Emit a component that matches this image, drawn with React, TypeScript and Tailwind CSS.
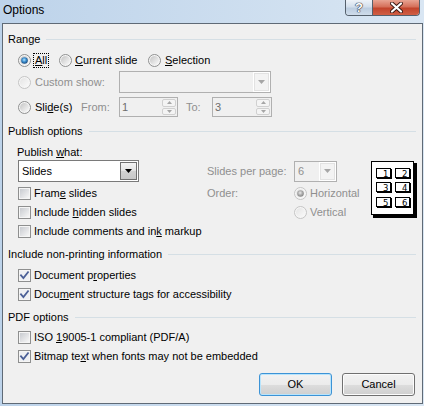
import React from "react";

function Radio({ checked = false, disabled = false }: { checked?: boolean; disabled?: boolean }) {
  return (
    <svg width="13" height="13" viewBox="0 0 13 13" className="shrink-0 block">
      <defs>
        <linearGradient id="rgE" x1="0" y1="0" x2="1" y2="1">
          <stop offset="0" stopColor="#c4c4c4" />
          <stop offset="1" stopColor="#fbfbfb" />
        </linearGradient>
        <linearGradient id="rgD" x1="0" y1="0" x2="1" y2="1">
          <stop offset="0" stopColor="#e4e4e4" />
          <stop offset="1" stopColor="#fafafa" />
        </linearGradient>
        <radialGradient id="rdB" cx="0.45" cy="0.4" r="0.6">
          <stop offset="0" stopColor="#b4e6fc" />
          <stop offset="0.5" stopColor="#3d8fd0" />
          <stop offset="1" stopColor="#18487c" />
        </radialGradient>
        <radialGradient id="rdG" cx="0.45" cy="0.4" r="0.6">
          <stop offset="0" stopColor="#ececec" />
          <stop offset="0.55" stopColor="#ababab" />
          <stop offset="1" stopColor="#858585" />
        </radialGradient>
      </defs>
      <circle cx="6.5" cy="6.5" r="6" fill="#f6f6f6" stroke={disabled ? "#c4c4c4" : "#8e8f8f"} />
      <circle cx="6.5" cy="6.5" r="4.5" fill={disabled ? "url(#rgD)" : "url(#rgE)"} />
      {checked && <circle cx="6.5" cy="6.5" r="3.3" fill={disabled ? "url(#rdG)" : "url(#rdB)"} />}
    </svg>
  );
}

function Check({ checked = false }: { checked?: boolean }) {
  return (
    <svg width="13" height="13" viewBox="0 0 13 13" className="shrink-0 block">
      <defs>
        <linearGradient id="cbG" x1="0" y1="0" x2="1" y2="1">
          <stop offset="0" stopColor="#c8cbd0" />
          <stop offset="1" stopColor="#f7f7f7" />
        </linearGradient>
      </defs>
      <rect x="0.5" y="0.5" width="12" height="12" fill="#f5f5f5" stroke="#8e8f8f" />
      <rect x="2" y="2" width="9" height="9" fill={checked ? "#eef0f3" : "url(#cbG)"} />
      {checked && (
        <path d="M3 6.3 L5.4 9 L10 3.2" fill="none" stroke="#4a5f97" strokeWidth="1.8" strokeLinecap="square" />
      )}
    </svg>
  );
}

function GroupHeader({ title }: { title: string }) {
  return (
    <div className="flex items-center h-[16px] pl-[5px] pr-[6px]">
      <span className="leading-[16px]">{title}</span>
      <div className="flex-1 h-px bg-[#d5dfe5] ml-[6px]" />
    </div>
  );
}

function Tri({ color }: { color: string }) {
  return (
    <svg width="7" height="4" viewBox="0 0 7 4" className="block">
      <path d="M0 0 H7 L3.5 4 Z" fill={color} />
    </svg>
  );
}

function SmallTri({ up }: { up?: boolean }) {
  return (
    <svg width="5" height="3" viewBox="0 0 5 3" className="block">
      <path d={up ? "M0 3 H5 L2.5 0 Z" : "M0 0 H5 L2.5 3 Z"} fill="#a6a6a6" />
    </svg>
  );
}

function DisabledCombo({ w, h, value }: { w: string; h: string; value?: string }) {
  return (
    <div className={`${w} ${h} shrink-0 border border-[#b0b0b0] bg-[#f0f0f0] flex items-stretch`}>
      <div className="flex-1 flex items-center pl-[3px] text-[#8f8f8f]">{value}</div>
      <div className="w-[17px] border border-white bg-[#f3f3f3] shadow-[inset_0_0_0_1px_#e2e2e2] flex items-center justify-center">
        <svg width="7" height="4" viewBox="0 0 7 4" className="block">
          <path d="M0 0 H7 L3.5 4 Z" fill="#a6a6a6" />
        </svg>
      </div>
    </div>
  );
}

function Spin({ w, value }: { w: string; value: string }) {
  return (
    <div className={`${w} h-[20px] shrink-0 border border-[#b0b0b0] bg-[#f0f0f0] flex items-stretch`}>
      <div className="flex-1 flex items-center pl-[2px] pt-[1px] text-[#6d6d6d]">{value}</div>
      <div className="w-[15px] flex flex-col py-[1px] pr-[1px] gap-[1px]">
        <div className="flex-1 border border-[#d0d0d0] rounded-[2px] bg-[#f4f4f4] flex items-center justify-center">
          <SmallTri up />
        </div>
        <div className="flex-1 border border-[#d0d0d0] rounded-[2px] bg-[#f4f4f4] flex items-center justify-center">
          <SmallTri />
        </div>
      </div>
    </div>
  );
}

function CheckRow({ checked, children }: { checked?: boolean; children: React.ReactNode }) {
  return (
    <div className="flex items-center h-[19px] pl-[15px]">
      <Check checked={checked} />
      <span className="ml-[3px] whitespace-nowrap">{children}</span>
    </div>
  );
}

function Thumb() {
  const cols = [5, 24];
  const rows = [7, 21, 36];
  let n = 0;
  return (
    <svg width="46" height="57" viewBox="0 0 46 57" className="block">
      <rect x="43" y="2" width="3" height="55" fill="#000" />
      <rect x="2" y="54" width="44" height="3" fill="#000" />
      <rect x="0.5" y="0.5" width="42" height="53" fill="#fff" stroke="#000" />
      {rows.map((ry) =>
        cols.map((cx) => {
          n += 1;
          return (
            <g key={`${cx}-${ry}`}>
              <rect x={cx + 0.5} y={ry + 0.5} width="14" height="9" fill="#fff" stroke="#000" />
              <rect x={cx + 15} y={ry + 1} width="1" height="10" fill="#000" />
              <rect x={cx + 1} y={ry + 10} width="15" height="1" fill="#000" />
              <text
                x={cx + 12.5}
                y={ry + 8.5}
                fontSize="8.5"
                textAnchor="end"
                fontFamily="'DejaVu Sans', Arial, sans-serif"
                fill="#000"
              >
                {n}
              </text>
            </g>
          );
        })
      )}
    </svg>
  );
}

function Btn({ children, primary }: { children: React.ReactNode; primary?: boolean }) {
  return (
    <div
      className={`w-[73px] h-[23px] rounded-[3px] border flex items-center justify-center bg-[linear-gradient(#f2f2f2_0%,#ebebeb_50%,#dddddd_50%,#cfcfcf_100%)] ${
        primary
          ? "border-[#3c93d6] shadow-[inset_0_0_0_1px_#b8e4fc]"
          : "border-[#707070] shadow-[inset_0_0_0_1px_#fcfcfc]"
      }`}
    >
      {children}
    </div>
  );
}

export default function App() {
  return (
    <div className="w-[424px] h-[406px] overflow-hidden bg-[linear-gradient(90deg,#bdd3ea,#d9e6f3)] font-['Liberation_Sans',Arial,sans-serif] text-[11px] text-black leading-none">
      {/* title bar */}
      <div className="h-[23px] flex items-start justify-between">
        <div className="pl-[3px] pt-[4px] text-[12px] leading-[13px]">Options</div>
        <div className="flex mr-[4px] h-[16px] border border-t-0 border-[#55606c] rounded-b-[4px] overflow-hidden">
          <div className="w-[27px] h-full bg-[linear-gradient(#eef3f9,#d3dfec_45%,#bccde0_55%,#cfdcea)] border-r border-[#55606c] flex items-center justify-center">
            <span className="text-[13px] font-bold text-white leading-none [text-shadow:0_0_1px_#223,0_0_1px_#223,0_0_1px_#223]">?</span>
          </div>
          <div className="w-[46px] h-full bg-[linear-gradient(#e8a493,#d5705a_45%,#c2442c_55%,#d05f45)] flex items-center justify-center">
            <svg width="13" height="11" viewBox="0 0 13 11" className="block">
              <path d="M2 1.5 L11 9.5 M11 1.5 L2 9.5" stroke="#3b1a14" strokeWidth="4" strokeLinecap="round" />
              <path d="M2 1.5 L11 9.5 M11 1.5 L2 9.5" stroke="#ffffff" strokeWidth="2.2" strokeLinecap="round" />
            </svg>
          </div>
        </div>
      </div>

      {/* client area */}
      <div className="ml-[2px] w-[421px] h-[381px] border border-[#5f6a76] bg-[#f0f0f0] flex flex-col pt-[7px]">
        <GroupHeader title="Range" />

        {/* row A */}
        <div className="mt-[3px] h-[20px] pl-[15px] flex items-center">
          <div className="w-[41px] flex items-center">
            <Radio checked />
            <span className="ml-[2px] border border-dotted border-black px-[1px] py-[1px] leading-[11px]">
              <u>A</u>ll
            </span>
          </div>
          <div className="w-[89px] flex items-center">
            <Radio />
            <span className="ml-[3px]">
              <u>C</u>urrent slide
            </span>
          </div>
          <div className="flex items-center">
            <Radio />
            <span className="ml-[4px]">
              <u>S</u>election
            </span>
          </div>
        </div>

        {/* row B */}
        <div className="mt-[1px] h-[22px] pl-[15px] flex items-center">
          <div className="w-[101px] shrink-0 flex items-center">
            <Radio disabled />
            <span className="ml-[4px] text-[#8f8f8f]">Custom show:</span>
          </div>
          <DisabledCombo w="w-[152px]" h="h-[22px]" />
        </div>

        {/* row C */}
        <div className="mt-[4px] h-[20px] pl-[15px] flex items-center">
          <div className="w-[63px] shrink-0 flex items-center">
            <Radio />
            <span className="ml-[4px]">
              Sli<u>d</u>e(s)
            </span>
          </div>
          <div className="w-[38px] shrink-0 text-[#8f8f8f]">From:</div>
          <Spin w="w-[59px]" value="1" />
          <div className="ml-[8px] w-[26px] shrink-0 text-[#8f8f8f]">To:</div>
          <Spin w="w-[60px]" value="3" />
        </div>

        <div className="mt-[6px]">
          <GroupHeader title="Publish options" />
        </div>

        {/* publish body */}
        <div className="mt-[5px] flex">
          <div className="w-[204px] shrink-0 pl-[15px] flex flex-col">
            <div className="h-[16px] -ml-[1px] flex items-center whitespace-pre">
              Publish <u>w</u>hat:
            </div>
            <div className="w-[121px] h-[22px] border border-[#7a7a7a] bg-white flex items-stretch">
              <div className="flex-1 flex items-center pl-[3px]">Slides</div>
              <div className="w-[17px] my-[1px] mr-[1px] border border-[#707070] bg-[linear-gradient(#f3f3f3,#e2e2e2_50%,#d2d2d2_50%,#c8c8c8)] flex items-center justify-center">
                <Tri color="#000" />
              </div>
            </div>
            <div className="mt-[2px] -ml-[15px]">
              <CheckRow>
                Fram<u>e</u> slides
              </CheckRow>
              <CheckRow>
                Include <u>h</u>idden slides
              </CheckRow>
              <CheckRow>
                Include comments and in<u>k</u> markup
              </CheckRow>
            </div>
          </div>

          <div className="w-[130px] shrink-0 pt-[16px] flex flex-col">
            <div className="h-[22px] flex items-center">
              <div className="w-[87px] shrink-0 text-[#8f8f8f] whitespace-nowrap">Slides per page:</div>
              <DisabledCombo w="w-[43px]" h="h-[21px]" value="6" />
            </div>
            <div className="mt-[2px] h-[19px] flex items-center whitespace-nowrap">
              <div className="w-[87px] shrink-0 text-[#8f8f8f]">Order:</div>
              <Radio checked disabled />
              <span className="ml-[3px] text-[#8f8f8f]">Horizontal</span>
            </div>
            <div className="h-[19px] flex items-center pl-[87px] whitespace-nowrap">
              <Radio disabled />
              <span className="ml-[3px] text-[#8f8f8f]">Vertical</span>
            </div>
          </div>

          <div className="ml-[34px] pt-[17px]">
            <Thumb />
          </div>
        </div>

        <div className="mt-[5px]">
          <GroupHeader title="Include non-printing information" />
        </div>
        <div className="mt-[4px]">
          <CheckRow checked>
            Document p<u>r</u>operties
          </CheckRow>
          <CheckRow checked>
            Docu<u>m</u>ent structure tags for accessibility
          </CheckRow>
        </div>

        <div className="mt-[5px]">
          <GroupHeader title="PDF options" />
        </div>
        <div className="mt-[3px]">
          <CheckRow>
            ISO <u>1</u>9005-1 compliant (PDF/A)
          </CheckRow>
          <CheckRow checked>
            Bitmap te<u>x</u>t when fonts may not be embedded
          </CheckRow>
        </div>

        <div className="mt-[7px] flex justify-end pr-[7px] gap-[10px]">
          <Btn primary>OK</Btn>
          <Btn>Cancel</Btn>
        </div>
      </div>
    </div>
  );
}
